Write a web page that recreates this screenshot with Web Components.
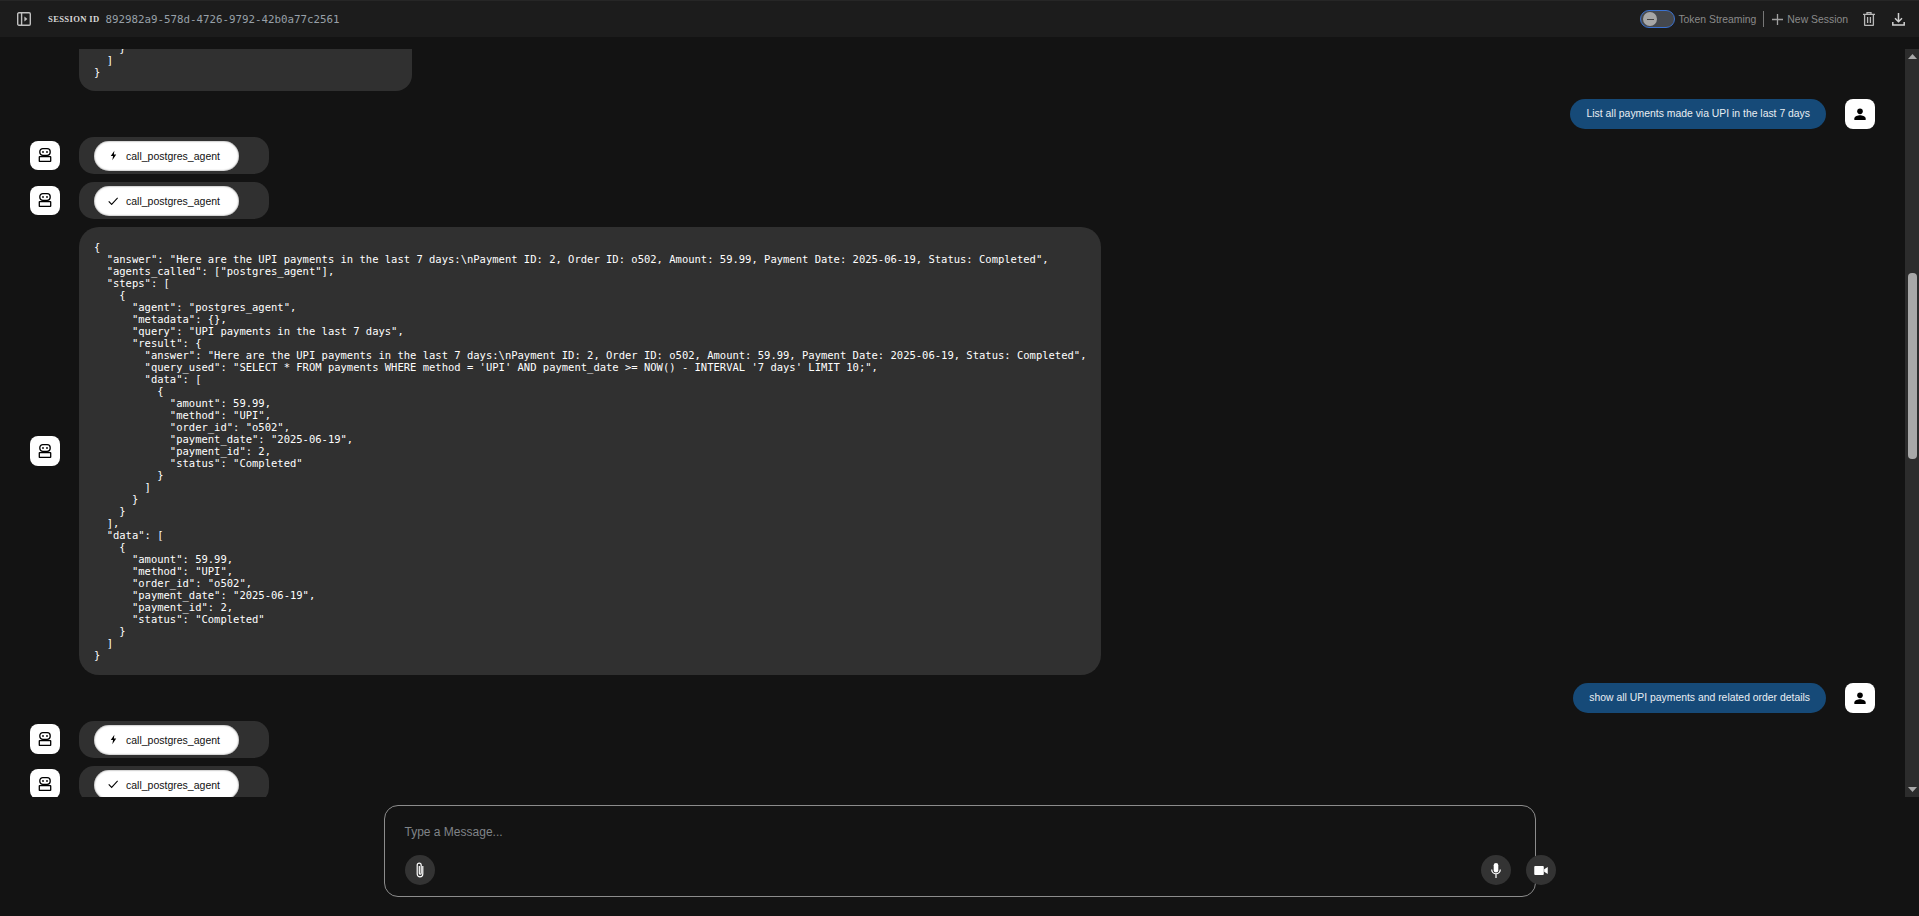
<!DOCTYPE html>
<html lang="en">
<head>
<meta charset="utf-8">
<title>Session</title>
<style>
  html, body { margin: 0; height: 100%; background: #131313; overflow: hidden; }
  body { font-family: "Liberation Sans", Arial, sans-serif; }
</style>
</head>
<body>
<chat-app>
  <chat-header slot="header" session="892982a9-578d-4726-9792-42b0a77c2561"></chat-header>

  <code-bubble slot="messages" clipped>    }
  ]
}</code-bubble>

  <chat-row slot="messages" role="user"><user-bubble>List all payments made via UPI in the last 7 days</user-bubble></chat-row>
  <chat-row slot="messages" role="bot"><tool-call state="running">call_postgres_agent</tool-call></chat-row>
  <chat-row slot="messages" role="bot"><tool-call state="done">call_postgres_agent</tool-call></chat-row>
  <chat-row slot="messages" role="bot"><code-bubble>{
  "answer": "Here are the UPI payments in the last 7 days:\nPayment ID: 2, Order ID: o502, Amount: 59.99, Payment Date: 2025-06-19, Status: Completed",
  "agents_called": ["postgres_agent"],
  "steps": [
    {
      "agent": "postgres_agent",
      "metadata": {},
      "query": "UPI payments in the last 7 days",
      "result": {
        "answer": "Here are the UPI payments in the last 7 days:\nPayment ID: 2, Order ID: o502, Amount: 59.99, Payment Date: 2025-06-19, Status: Completed",
        "query_used": "SELECT * FROM payments WHERE method = 'UPI' AND payment_date >= NOW() - INTERVAL '7 days' LIMIT 10;",
        "data": [
          {
            "amount": 59.99,
            "method": "UPI",
            "order_id": "o502",
            "payment_date": "2025-06-19",
            "payment_id": 2,
            "status": "Completed"
          }
        ]
      }
    }
  ],
  "data": [
    {
      "amount": 59.99,
      "method": "UPI",
      "order_id": "o502",
      "payment_date": "2025-06-19",
      "payment_id": 2,
      "status": "Completed"
    }
  ]
}</code-bubble></chat-row>
  <chat-row slot="messages" role="user"><user-bubble>show all UPI payments and related order details</user-bubble></chat-row>
  <chat-row slot="messages" role="bot"><tool-call state="running">call_postgres_agent</tool-call></chat-row>
  <chat-row slot="messages" role="bot"><tool-call state="done">call_postgres_agent</tool-call></chat-row>

  <chat-input slot="footer"></chat-input>
</chat-app>

<script>
// Small helper: every component gets an open shadow root from a template string
function montar(el, html) {
  el.attachShadow({ mode: 'open' }).innerHTML = html;
}

// Icons are shared by several components
const ICONOS = {
  robot: '<svg width="14" height="14" viewBox="0 0 14 14" fill="none" stroke="#000" stroke-width="1.3"><rect x="1.8" y="0.7" width="10.4" height="6.6" rx="3"/><circle cx="5" cy="4" r=".9" fill="#000" stroke="none"/><circle cx="9" cy="4" r=".9" fill="#000" stroke="none"/><rect x="1.3" y="8.7" width="11.4" height="4.6" rx=".4"/></svg>',
  user: '<svg width="16" height="16" viewBox="0 0 24 24" fill="#000"><circle cx="12" cy="8" r="4.2"/><path d="M3.5 21v-2.2C3.5 15.3 9 14 12 14s8.5 1.3 8.5 4.8V21z"/></svg>',
  bolt: '<svg width="7" height="11" viewBox="0 0 9 12" fill="#000"><path d="M5.6 0 1 6.8h2.9L3 12l5-7.2H5z"/></svg>',
  check: '<svg width="10.5" height="8.5" viewBox="0 0 11 9" fill="none" stroke="#000" stroke-width="1.2"><path d="M.7 4.7 3.8 7.8 10.2.9"/></svg>'
};

// Page frame: header on top, messages with scrollbar, input at the bottom
class ChatApp extends HTMLElement {
  constructor() {
    super();
    montar(this, `
      <style>
        :host { display: flex; flex-direction: column; height: 916px; background: #131313; }
        .centro { height: 748px; margin-top: 12px; display: flex; }
        .mensajes { flex: 1; min-width: 0; overflow: hidden; display: flex; flex-direction: column; gap: 8px; padding: 0 30px; box-sizing: border-box; }
        ::slotted(code-bubble) { margin-left: 49px; align-self: flex-start; }
        .pie { flex: 1; display: flex; justify-content: center; }
      </style>
      <slot name="header"></slot>
      <div class="centro">
        <div class="mensajes"><slot name="messages"></slot></div>
        <fake-scrollbar></fake-scrollbar>
      </div>
      <div class="pie"><slot name="footer"></slot></div>
    `);
  }
}

class ChatHeader extends HTMLElement {
  constructor() {
    super();
    montar(this, `
      <style>
        :host { display: flex; align-items: center; height: 36px; background: #1c1c1c; border-top: 1px solid #262626; padding: 0 14px 0 17px; color: #8a8a8a; font-size: 10.4px; }
        .panel { display: block; margin-right: 17px; }
        .etiqueta { font: bold 8.6px "Liberation Serif", serif; letter-spacing: .35px; color: #d8d8d8; margin-right: 6px; }
        .uuid { font: 10.8px "DejaVu Sans Mono", monospace; color: #98a0a8; }
        .derecha { margin-left: auto; display: flex; align-items: center; }
        .toggle { width: 35px; height: 18px; box-sizing: border-box; border: 1px solid #3b72d0; border-radius: 9px; background: #45484d; padding: 1px 2px; margin-right: 3px; }
        .toggle div { width: 14px; height: 14px; border-radius: 50%; background: #a6a6a6; display: flex; align-items: center; justify-content: center; }
        .toggle div i { width: 7px; height: 1px; background: #444; }
        .sep { width: 1px; height: 16px; background: #777; margin: 0 8px 0 7px; }
        .nueva { display: flex; align-items: center; gap: 4px; margin-right: 15px; }
        .borrar { margin-right: 17px; }
        svg { display: block; }
      </style>
      <svg class="panel" width="14" height="14" viewBox="0 0 14 14" fill="none" stroke="#c0c0c0" stroke-width="1.4"><rect x=".7" y=".8" width="12.6" height="12.4" rx="1.2"/><path d="M4.6 .8v12.4"/><path d="M7.4 4.4 10.4 7 7.4 9.6z" fill="#c0c0c0" stroke="none"/></svg>
      <span class="etiqueta">SESSION ID</span>
      <span class="uuid">${this.getAttribute('session')}</span>
      <div class="derecha">
        <div class="toggle"><div><i></i></div></div>
        <span>Token Streaming</span>
        <div class="sep"></div>
        <div class="nueva">
          <svg width="11" height="11" viewBox="0 0 11 11" stroke="#a0a0a0" stroke-width="1.3"><path d="M5.5 0v11M0 5.5h11"/></svg>
          <span>New Session</span>
        </div>
        <svg class="borrar" width="12" height="14" viewBox="0 0 12 14" fill="none" stroke="#b8b8b8" stroke-width="1.3"><path d="M0 2.4h12M4 2.2V.7h4v1.5M1.6 2.6v10.2a.7.7 0 0 0 .7.7h7.4a.7.7 0 0 0 .7-.7V2.6M4.6 5v6M7.4 5v6"/></svg>
        <svg width="13" height="13" viewBox="0 0 13 13" fill="none" stroke="#d0d0d0" stroke-width="1.5"><path d="M6.5 0v8.4M3 5.2l3.5 3.5L10 5.2M.8 9v3h11.4V9"/></svg>
      </div>
    `);
  }
}

// One line of the chat: avatar left for the bot, right for the user
class ChatRow extends HTMLElement {
  constructor() {
    super();
    const esUser = this.getAttribute('role') === 'user';
    montar(this, `
      <style>
        :host { display: flex; align-items: center; gap: 19px; flex: none; justify-content: ${esUser ? 'flex-end' : 'flex-start'}; }
        .avatar { width: 30px; height: 29.6px; border-radius: 8px; background: #fff; display: flex; align-items: center; justify-content: center; flex: none; order: ${esUser ? 1 : 0}; }
        svg { display: block; }
      </style>
      <div class="avatar">${esUser ? ICONOS.user : ICONOS.robot}</div>
      <slot></slot>
    `);
  }
}

class UserBubble extends HTMLElement {
  constructor() {
    super();
    montar(this, `
      <style>
        :host { display: block; height: 29.6px; line-height: 30.8px; padding: 0 16px; border-radius: 15px; background: #164a78; color: #e9eef3; font-size: 10.4px; }
      </style>
      <slot></slot>
    `);
  }
}

class ToolCall extends HTMLElement {
  constructor() {
    super();
    const icono = this.getAttribute('state') === 'done' ? ICONOS.check : ICONOS.bolt;
    montar(this, `
      <style>
        :host { display: block; padding: 4px 30px 3px 15px; background: #303030; border-radius: 15px; }
        .pill { display: flex; align-items: center; width: 145px; height: 30px; box-sizing: border-box; border-radius: 15px; background: #fff; box-shadow: inset 0 0 2px #666; color: #111; font-size: 10.5px; }
        .ico { width: 32px; display: flex; justify-content: center; padding-left: 6px; box-sizing: border-box; }
      </style>
      <div class="pill"><span class="ico">${icono}</span><slot></slot></div>
    `);
  }
}

class CodeBubble extends HTMLElement {
  constructor() {
    super();
    const cortado = this.hasAttribute('clipped');
    montar(this, `
      <style>
        :host { display: block; flex: none; background: #303030; color: #fff; border-radius: ${cortado ? '0 0 16px 16px' : '20px'}; padding: ${cortado ? '0 15px 13.4px' : '14px 15px'}; ${cortado ? 'width: 303px; margin-top: -7px;' : ''} }
        pre { margin: 0; font: 10.5px/12px "DejaVu Sans Mono", monospace; }
      </style>
      <pre><slot></slot></pre>
    `);
  }
}

// The reference shows the classic browser scrollbar, drawn here so it stays pixel stable
class FakeScrollbar extends HTMLElement {
  constructor() {
    super();
    montar(this, `
      <style>
        :host { display: flex; flex-direction: column; align-items: center; width: 14px; flex: none; background: #2c2c2c; }
        .flecha { height: 15px; display: flex; align-items: center; justify-content: center; }
        .hueco { flex: 1; width: 100%; padding-top: 209px; box-sizing: border-box; }
        .barra { width: 9px; height: 186px; margin: 0 auto; border-radius: 4px; background: #a8a8a8; }
      </style>
      <div class="flecha"><svg width="9" height="5" viewBox="0 0 9 5" fill="#a8a8a8"><path d="M4.5 0 9 5H0z"/></svg></div>
      <div class="hueco"><div class="barra"></div></div>
      <div class="flecha"><svg width="9" height="5" viewBox="0 0 9 5" fill="#a8a8a8"><path d="M0 0h9L4.5 5z"/></svg></div>
    `);
  }
}

class ChatInput extends HTMLElement {
  constructor() {
    super();
    montar(this, `
      <style>
        :host { display: block; width: 1152px; height: 92px; margin-top: 8px; box-sizing: border-box; border: 1px solid #8c8c8c; border-radius: 14px; padding: 0 20px; position: relative; }
        .texto { height: 49px; line-height: 52px; color: #808488; font-size: 12px; }
        .acciones { display: flex; justify-content: space-between; padding-right: 4px; }
        .redondo { width: 30px; height: 30px; border-radius: 50%; background: #333; display: flex; align-items: center; justify-content: center; }
        .video { position: absolute; left: 1141px; top: 49px; }
        svg { display: block; }
      </style>
      <div class="texto">Type a Message...</div>
      <div class="acciones">
        <div class="redondo"><svg width="10" height="16" viewBox="0 0 10 16" fill="none" stroke="#fff" stroke-width="1.2"><path d="M7.8 4v8a2.8 2.8 0 0 1-5.6 0V3.2a2 2 0 0 1 4 0v8a.9.9 0 0 1-1.9 0V4"/></svg></div>
        <div class="redondo"><svg width="10" height="15" viewBox="0 0 10 15" fill="none" stroke="#fff" stroke-width="1.2"><rect x="2.7" y="0" width="4.6" height="9.6" rx="2.3" fill="#fff" stroke="none"/><path d="M.7 6.6a4.3 4.3 0 0 0 8.6 0M5 11v4"/></svg></div>
      </div>
      <div class="redondo video"><svg width="14" height="9" viewBox="0 0 15 10" fill="#fff"><rect x="0" y="0" width="10.6" height="10" rx="1"/><path d="M11 3.6 15 1v8l-4-2.6z"/></svg></div>
    `);
  }
}

customElements.define('chat-app', ChatApp);
customElements.define('chat-header', ChatHeader);
customElements.define('chat-row', ChatRow);
customElements.define('user-bubble', UserBubble);
customElements.define('tool-call', ToolCall);
customElements.define('code-bubble', CodeBubble);
customElements.define('fake-scrollbar', FakeScrollbar);
customElements.define('chat-input', ChatInput);
</script>
</body>
</html>
